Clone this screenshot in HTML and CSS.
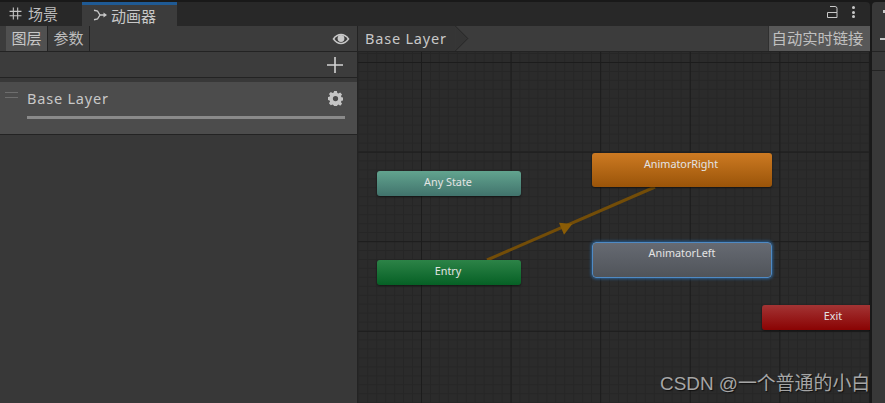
FILE: index.html
```html
<!DOCTYPE html>
<html lang="zh">
<head>
<meta charset="utf-8">
<title>动画器</title>
<link rel="stylesheet" href="styles.css">
</head>
<body>
<div class="app">
  <div class="window">
    <div class="tabbar">
      <div class="tab">
        <svg class="tab-icon" viewBox="0 0 12 12"><path d="M4 .5v11M8 .5v11M.5 4h11M.5 8h11" fill="none" stroke="#c4c4c4" stroke-width="1"/></svg>
        <span>场景</span>
      </div>
      <div class="tab tab-active">
        <svg class="tab-icon-anim" viewBox="0 0 14 12"><path d="M1 1.200L4.500 2l2.500 4h4.500M1 10.800L4.500 10 7 6" fill="none" stroke="#c8c8c8" stroke-width="1.400"/><path d="M10.500 3.500L14 6l-3.500 2.500z" fill="#c8c8c8"/></svg>
        <span>动画器</span>
      </div>
      <div class="tab-tools">
        <svg class="lock" viewBox="0 0 11 12"><path d="M.5 6.500h9.500v5H.5zM3 .5h5a2 2 0 0 1 2 2v4" fill="none" stroke="#c8c8c8" stroke-width="1"/></svg>
        <span class="kebab"><i></i><i></i><i></i></span>
      </div>
    </div>
    <div class="panels">
      <aside class="left">
        <div class="left-tabs">
          <button class="seg seg-on">图层</button>
          <button class="seg">参数</button>
          <svg class="eye" viewBox="0 0 18 12"><path d="M.5 6C3 2.300 6 .8 9 .8s6 1.500 8.500 5.200C15 9.700 12 11.200 9 11.200S3 9.700.5 6z" fill="#c8c8c8"/><path d="M2.500 6C4.500 3.500 6.500 2.300 9 2.300s4.500 1.200 6.500 3.700c-2 2.500-4 3.700-6.500 3.700S4.500 8.500 2.500 6z" fill="#3c3c3c"/><circle cx="9" cy="5.500" r="3.400" fill="#c8c8c8"/></svg>
        </div>
        <div class="left-add">
          <svg class="plus" viewBox="0 0 16 16"><path d="M8 0v16M0 8h16" stroke="#d2d2d2" stroke-width="1.600"/></svg>
        </div>
        <div class="layer">
          <span class="grip"></span>
          <div class="layer-body">
            <div class="layer-head">
              <span class="layer-name">Base Layer</span>
              <svg class="gear" viewBox="0 0 16 16"><path fill="#c4c4c4" fill-rule="evenodd" d="M6.500 0h3l.4 2.100 1.300.6L13 1.500l2 2.100-1.200 1.800.6 1.300 2.100.4v3l-2.100.4-.6 1.300 1.200 1.800-2 2.100-1.800-1.200-1.300.6-.4 2.100h-3l-.4-2.100-1.300-.6L3 15.200l-2-2.100 1.200-1.800-.6-1.300L-.5 9.600v-3l2.100-.4.600-1.300L1 3.100l2-2.100 1.800 1.200 1.300-.6zM8 5.300a2.800 2.800 0 1 0 0 5.600 2.800 2.800 0 0 0 0-5.600z"/></svg>
            </div>
            <div class="slider"></div>
          </div>
        </div>
      </aside>
      <main class="graph-col">
        <div class="crumbs">
          <div class="crumb">Base Layer</div>
          <svg class="chevron" viewBox="0 0 14 26"><path d="M0 0L13 13 0 26z" fill="#353535"/><path d="M0 0L13 13 0 26" fill="none" stroke="#262626"/></svg>
          <button class="live">自动实时链接</button>
        </div>
        <div class="graph">
          <svg class="wires" viewBox="0 0 512 351"><path d="M129 208L297 135" stroke="#734d08" stroke-width="3"/><path d="M201 170.700L214.300 172 206 182.700z" fill="#8a5c06"/></svg>
          <div class="node any">Any State</div>
          <div class="node entry">Entry</div>
          <div class="node state right">AnimatorRight</div>
          <div class="node state left-state">AnimatorLeft</div>
          <div class="node exit">Exit</div>
          <div class="mark">CSDN @一个普通的小白</div>
        </div>
      </main>
    </div>
  </div>
  <div class="side">
    <div class="side-top"><span class="side-glyph"></span></div>
    <div class="side-minus"><i></i></div>
    <div class="side-row"></div>
  </div>
</div>
</body>
</html>
```
FILE: styles.css
```css
* { box-sizing: border-box; }
html, body { margin: 0; height: 100%; overflow: hidden; background: #191919; }
body { font-family: "Noto Sans", "Noto Sans CJK SC", sans-serif; color: #c4c4c4; }
button { font: inherit; color: inherit; border: 0; padding: 0; }

.app { display: flex; width: 885px; height: 403px; padding-top: 2px; gap: 2px; }
.window { width: 870px; display: flex; flex-direction: column; }

.tabbar { height: 24px; display: flex; background: #282828; border-top-right-radius: 4px; flex: none; }
.tab { width: 82px; display: flex; align-items: center; gap: 6px; padding-left: 9px; padding-bottom: 2px; font-size: 15px; color: #bdbdbd; font-family: "Noto Sans CJK SC", sans-serif; }
.tab-icon { width: 13px; height: 13px; }
.tab-icon-anim { width: 14px; height: 12px; margin-left: 1px; margin-right: -2px; }
.tab-active { width: 95px; background: #3c3c3c; border-top: 3px solid #1f5a94; padding-bottom: 1px; padding-left: 10px; color: #c8c8c8; }
.tab-tools { margin-left: auto; display: flex; align-items: center; gap: 14px; padding-right: 15px; padding-bottom: 4px; }
.lock { width: 11px; height: 12px; display: block; }
.kebab { display: flex; flex-direction: column; gap: 1.500px; }
.kebab i { width: 3px; height: 3px; background: #c8c8c8; border-radius: 50%; }

.panels { flex: 1; display: flex; min-height: 0; }
.left { width: 358px; flex: none; background: #383838; border-right: 1px solid #232323; display: flex; flex-direction: column; }
.left-tabs { height: 26px; display: flex; align-items: stretch; padding-left: 6px; background: #3c3c3c; border-bottom: 1px solid #232323; flex: none; }
.seg { width: 42px; height: 25px; background: #3c3c3c; border-right: 1px solid #232323; padding-bottom: 3px; font-size: 15px; font-family: "Noto Sans CJK SC", sans-serif; color: #bdbdbd; }
.seg-on { background: #505050; color: #c8c8c8; }
.eye { width: 18px; height: 12px; margin: 7px 7px 0 auto; }
.left-add { height: 26px; display: flex; align-items: center; justify-content: flex-end; padding-right: 14px; background: #3c3c3c; border-bottom: 1px solid #232323; flex: none; }
.plus { width: 16px; height: 16px; }
.layer { margin-top: 4px; height: 53px; background: #4c4c4c; border-bottom: 1px solid #232323; display: flex; flex: none; position: relative; }
.grip { width: 13px; height: 6px; margin: 10px 0 0 5px; border-top: 1px solid #6e6e6e; border-bottom: 1px solid #6e6e6e; flex: none; }
.layer-body { margin-left: 9px; width: 318px; display: flex; flex-direction: column; }
.layer-head { height: 34px; display: flex; align-items: center; justify-content: space-between; padding-bottom: 2px; }
.layer-name { font-size: 14.500px; letter-spacing: .8px; color: #c8c8c8; }
.gear { width: 15px; height: 15px; margin-right: 2px; }
.slider { height: 3px; background: #8a8a8a; }

.graph-col { flex: 1; display: flex; flex-direction: column; min-width: 0; }
.crumbs { height: 26px; display: flex; background: #3c3c3c; border-bottom: 1px solid #232323; flex: none; }
.crumb { width: 97px; background: #353535; font-size: 14.500px; letter-spacing: .8px; padding-left: 7px; line-height: 25px; color: #c8c8c8; }
.chevron { width: 14px; height: 25px; flex: none; }
.live { margin-left: auto; width: 102px; background: #585858; border-left: 1px solid #303030; height: 25px; padding: 0 4px 3px 0; font-size: 15.300px; font-family: "Noto Sans CJK SC", sans-serif; color: #c0c0c0; white-space: nowrap; }

.graph {
  flex: 1; position: relative; overflow: hidden; background-color: #2b2b2b;
  background-image:
    linear-gradient(to right, #1c1c1c 1px, transparent 1px),
    linear-gradient(to bottom, #1c1c1c 1px, transparent 1px),
    linear-gradient(to right, #262626 1px, transparent 1px),
    linear-gradient(to bottom, #262626 1px, transparent 1px);
  background-size: 89.6px 89.6px, 89.6px 89.6px, 8.96px 8.96px, 8.96px 8.96px;
  background-position: 63px 10px, 63px 10px, 0.300px 1px, 0.300px 1px;
}
.wires { position: absolute; left: 0; top: 0; width: 512px; height: 351px; }
.node { position: absolute; width: 144px; height: 25px; border-radius: 3px; font-size: 10.800px; line-height: 22px; text-align: center; padding-right: 2px; color: #e4e4e4; box-shadow: 0 1px 2px rgba(0,0,0,.5); }
.any { left: 19px; top: 119px; background: linear-gradient(#62a48f, #41736c); }
.entry { left: 19px; top: 208px; background: linear-gradient(#2c8347, #066025); }
.state { width: 180px; height: 34px; line-height: 21px; }
.right { left: 234px; top: 101px; background: linear-gradient(#cd7a22, #9a5409); }
.left-state { left: 234px; top: 190px; height: 36px; border-radius: 4px; background: linear-gradient(#666a72, #50545a); border: 1px solid #4f8ac4; box-shadow: 0 0 3px 1px rgba(42,111,176,.8); line-height: 19px; padding-right: 0; }
.exit { left: 404px; top: 253px; background: linear-gradient(#a33434, #8a0303); }
.mark { position: absolute; left: 302px; top: 320px; font-family: "Liberation Sans", "Noto Sans CJK SC", sans-serif; font-size: 18.900px; line-height: 24px; white-space: nowrap; color: #a6a6a6; text-shadow: 1px 1px 1px #111; }

.side { flex: 1; display: flex; flex-direction: column; background: #383838; border-top-left-radius: 4px; }
.side-top { height: 24px; display: flex; justify-content: flex-end; }
.side-glyph { width: 2px; height: 3px; margin-top: 8px; background: #c8c8c8; }
.side-minus { height: 26px; padding: 12px 0 0 8px; border-bottom: 1px solid #232323; }
.side-minus i { display: block; width: 5px; height: 2px; background: #c8c8c8; }
.side-row { height: 19px; border-bottom: 1px solid #232323; }
```
